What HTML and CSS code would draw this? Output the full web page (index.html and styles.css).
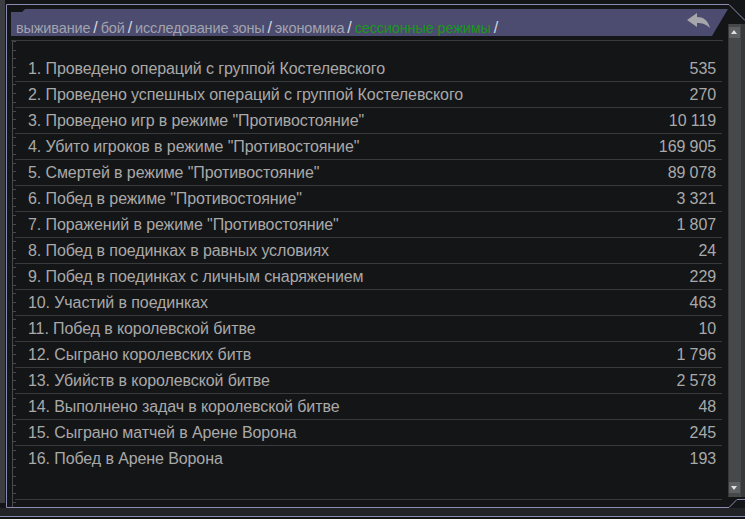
FILE: index.html
```html
<!DOCTYPE html>
<html lang="ru">
<head>
    <meta charset="UTF-8">
    <title>Статистика - сессионные режимы</title>
    <link rel="stylesheet" href="styles.css">
</head>
<body>
    <div class="side"></div>

    <div class="panel">
        <div class="col">
            <div class="tab">
                <div class="crumbs"><span class="crumb">выживание</span><span class="sep">/</span><span class="crumb">бой</span><span class="sep">/</span><span class="crumb">исследование зоны</span><span class="sep">/</span><span class="crumb">экономика</span><span class="sep">/</span><span class="crumb active">сессионные режимы</span><span class="sep">/</span></div>
                <svg class="back" width="23" height="15" viewBox="0 0 23 15">
                    <path d="M0 7 L10 0 L10 4 C16 4 21 7 23 15 C19 11 15 10 10 10 L10 14 Z" fill="#a6a7ab"/>
                </svg>
            </div>

            <div class="list">
                <div class="rows" id="rows"></div>
            </div>
        </div>

        <div class="scroll">
            <div class="track">
                <div class="btn up"></div>
                <div class="btn down"></div>
            </div>
        </div>
    </div>

    <!-- рамка окна -->
    <svg class="frame" width="745" height="519" viewBox="0 0 745 519">
        <rect x="0" y="508" width="745" height="8" fill="#222326"/>
        <polyline points="745,20.5 729,4.5 6.5,4.5 6.5,507.5 729,507.5 737,499.5 745,499.5" fill="none" stroke="#8a8db2" stroke-width="1"/>
        <line x1="0" y1="516.5" x2="745" y2="516.5" stroke="#8a8db2" stroke-width="1"/>
    </svg>

    <script>
        // данные статистики
        const stats = [
            ["Проведено операций с группой Костелевского", "535"],
            ["Проведено успешных операций с группой Костелевского", "270"],
            ["Проведено игр в режиме \"Противостояние\"", "10 119"],
            ["Убито игроков в режиме \"Противостояние\"", "169 905"],
            ["Смертей в режиме \"Противостояние\"", "89 078"],
            ["Побед в режиме \"Противостояние\"", "3 321"],
            ["Поражений в режиме \"Противостояние\"", "1 807"],
            ["Побед в поединках в равных условиях", "24"],
            ["Побед в поединках с личным снаряжением", "229"],
            ["Участий в поединках", "463"],
            ["Побед в королевской битве", "10"],
            ["Сыграно королевских битв", "1 796"],
            ["Убийств в королевской битве", "2 578"],
            ["Выполнено задач в королевской битве", "48"],
            ["Сыграно матчей в Арене Ворона", "245"],
            ["Побед в Арене Ворона", "193"]
        ];

        const rows = document.getElementById('rows');
        stats.forEach((s, i) => {
            const row = document.createElement('div');
            row.className = 'row';
            row.innerHTML = `<span>${i + 1}. ${s[0]}</span><span>${s[1]}</span>`;
            rows.appendChild(row);
        });
    </script>
</body>
</html>
```

FILE: styles.css
```css
body {
    margin: 0;
    width: 745px;
    height: 519px;
    overflow: hidden;
    background-color: #141517;
    font-family: "Liberation Sans", Arial, sans-serif;
    display: flex;
    align-items: flex-start;
    position: relative;
}
.side {
    width: 5px;
    height: 503px;
    background-color: #3d3e41;
}
.panel {
    display: flex;
    padding: 9px 0 0 6px;
}
.col {
    width: 717px;
}
.tab {
    height: 27px;
    background-color: #4b4c6f;
    clip-path: polygon(0 3px, 11px 3px, 14px 0, 100% 0, calc(100% - 16px) 100%, 0 100%);
    display: flex;
    justify-content: space-between;
    align-items: flex-start;
    padding: 0 18px 0 5px;
}
.crumbs {
    font-size: 14.5px;
    padding-top: 10px;
    color: #a2a3ae;
    white-space: nowrap;
    letter-spacing: -0.15px;
}
.crumb.active {
    color: #1c961c;
}
.sep {
    color: #d6d7e0;
    font-size: 16px;
    margin: 0 3px 0 3px;
}
.back {
    margin-top: 4px;
}
.list {
    margin-top: 4px;
    height: 458px;
    padding-top: 15px;
    border-top: 1px solid #3a3b3f;
    width: 712px;
    background-image:
        linear-gradient(#48494c, #48494c),
        repeating-linear-gradient(to bottom, #48494c 0 1px, transparent 1px 8.7px),
        linear-gradient(#48494c, #48494c),
        repeating-linear-gradient(to bottom, #48494c 0 1px, transparent 1px 8.7px);
    background-size: 1px 100%, 4px 100%, 1px 100%, 4px 100%;
    background-position: 1px 0, 1px 0, 715px 0, 712px 0;
    background-repeat: no-repeat;
}
.rows {
    margin: 0 1px 0 4px;
    height: 443px;
    border-bottom: 1px solid #3a3b3e;
}
.row {
    display: flex;
    justify-content: space-between;
    height: 25px;
    line-height: 25px;
    border-bottom: 1px solid #393a3d;
    padding: 0 6px 0 13px;
    font-size: 16px;
    letter-spacing: -0.1px;
    color: #a9a9a9;
    white-space: nowrap;
}
.row:last-child {
    border-bottom: none;
}
.scroll {
    margin-top: 15px;
    width: 17px;
    height: 473px;
    background-color: #38393b;
}
.track {
    margin-left: 1px;
    width: 12px;
    height: 100%;
    background-color: #47484a;
    display: flex;
    flex-direction: column;
    justify-content: space-between;
    padding: 3px 0 4px;
    box-sizing: border-box;
}
.btn {
    width: 11px;
    height: 11px;
    background-color: #5f6063;
    position: relative;
}
.btn::after {
    content: "";
    position: absolute;
    left: 2px;
    border-left: 3.5px solid transparent;
    border-right: 3.5px solid transparent;
}
.btn.up::after {
    top: 3px;
    border-bottom: 4px solid #e0e0e0;
}
.btn.down::after {
    top: 4px;
    border-top: 4px solid #e0e0e0;
}
.frame {
    position: absolute;
    left: 0;
    top: 0;
    pointer-events: none;
}
```
